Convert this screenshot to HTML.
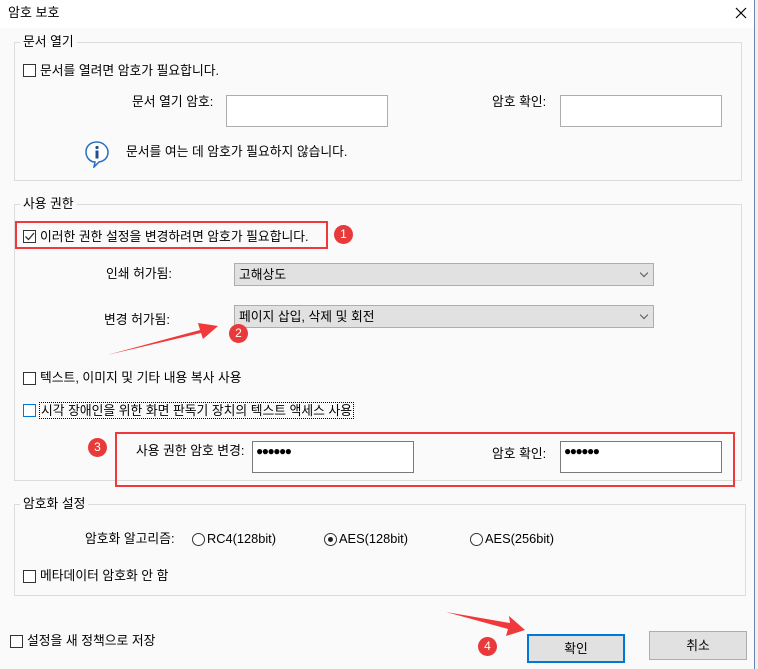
<!DOCTYPE html>
<html><head><meta charset="utf-8"><style>
*{margin:0;padding:0;box-sizing:border-box}
body{width:758px;height:669px;overflow:hidden;background:#fff;font-family:"Liberation Sans","Noto Sans CJK KR","NanumGothic",sans-serif;font-size:12.8px;color:#000;position:relative}
.a{position:absolute;white-space:nowrap;line-height:16px}
.body{position:absolute;left:0;top:28px;width:754px;height:641px;background:#fafafa}
.edge{position:absolute;left:754px;top:0;width:4px;height:669px;background:#f0f0f0;border-left:1px solid #6a86a8}
.grp{position:absolute;border:1px solid #dcdcdc}
.leg{position:absolute;background:#fafafa;padding:0 3px;line-height:16px}
.cb{position:absolute;width:13px;height:13px;border:1px solid #333;background:#fff}
.in{position:absolute;border:1px solid #adadad;background:#fff}
.in2{position:absolute;border:1px solid #7a7a7a;background:#fff;font-size:12px;letter-spacing:-1.5px;padding-left:3px;line-height:18px}
.sel{position:absolute;border:1px solid #adadad;background:#e1e1e1;padding-left:4px;line-height:21px}
.sel:after{content:"";position:absolute;right:6px;top:6px;width:5px;height:5px;border-right:1px solid #555;border-bottom:1px solid #555;transform:rotate(45deg)}
.red{position:absolute;border:2.5px solid #f0393a}
.bd{position:absolute;width:19px;height:19px;border-radius:50%;background:#e83a3a;color:#fff;font-size:12px;text-align:center;line-height:19px}
.rd{position:absolute;width:13px;height:13px;border:1px solid #333;border-radius:50%;background:#fff}
.btn{position:absolute;background:#e1e1e1;border:1px solid #adadad;text-align:center}
</style></head><body>
<div class="body"></div>
<div class="edge"></div>
<div class="a" style="left:8px;top:5px;font-size:13px">암호 보호</div>
<svg class="a" style="left:735px;top:7px" width="12" height="12"><path d="M1 1L11 11M11 1L1 11" stroke="#000" stroke-width="1.2"/></svg>

<div class="grp" style="left:14px;top:42px;width:728px;height:139px"></div>
<div class="leg" style="left:20px;top:34px">문서 열기</div>
<div class="cb" style="left:23px;top:64px"></div>
<div class="a" style="left:40px;top:63px">문서를 열려면 암호가 필요합니다.</div>
<div class="a" style="left:132px;top:94px">문서 열기 암호:</div>
<div class="in" style="left:226px;top:95px;width:162px;height:32px"></div>
<div class="a" style="left:492px;top:94px">암호 확인:</div>
<div class="in" style="left:560px;top:95px;width:162px;height:32px"></div>
<svg class="a" style="left:84px;top:140px" width="26" height="28"><path d="M13 2C6 2 2 6.5 2 12s4 10 9 10l-1 5 5-5c6-1 9-5 9-10S19 2 13 2z" fill="#fff" stroke="#2a6ebf" stroke-width="1.5"/><circle cx="13" cy="7.5" r="1.6" fill="#1f4f8f"/><rect x="11.5" y="10.5" width="3" height="8" fill="#1f4f8f"/></svg>
<div class="a" style="left:126px;top:144px">문서를 여는 데 암호가 필요하지 않습니다.</div>

<div class="grp" style="left:14px;top:204px;width:728px;height:277px"></div>
<div class="leg" style="left:20px;top:196px">사용 권한</div>
<div class="red" style="left:15px;top:221px;width:313px;height:28px"></div>
<div class="cb" style="left:23px;top:230px"></div>
<svg class="a" style="left:24px;top:231px" width="11" height="11"><path d="M1.5 5.5L4.5 8.5L10 2" fill="none" stroke="#333" stroke-width="1.3"/></svg>
<div class="a" style="left:40px;top:229px">이러한 권한 설정을 변경하려면 암호가 필요합니다.</div>
<div class="bd" style="left:334px;top:225px">1</div>
<div class="a" style="left:106px;top:266px">인쇄 허가됨:</div>
<div class="sel" style="left:234px;top:263px;width:420px;height:23px">고해상도</div>
<div class="a" style="left:104px;top:312px">변경 허가됨:</div>
<div class="sel" style="left:234px;top:305px;width:420px;height:23px">페이지 삽입, 삭제 및 회전</div>
<svg class="a" style="left:0;top:0" width="758" height="669"><path d="M107 355L200 330L198 323L218 326L203 339L201 333Z" fill="#f0393a"/><path d="M446 612L510 623L509 616L525 630L506 636L508 629Z" fill="#f0393a"/></svg>
<div class="bd" style="left:229px;top:324px">2</div>
<div class="cb" style="left:23px;top:372px"></div>
<div class="a" style="left:40px;top:370px">텍스트, 이미지 및 기타 내용 복사 사용</div>
<div class="cb" style="left:23px;top:404px;border-color:#0078d7"></div>
<div class="a" style="left:39px;top:402px;border:1px dotted #000;padding:0 1px;line-height:15px">시각 장애인을 위한 화면 판독기 장치의 텍스트 액세스 사용</div>
<div class="red" style="left:115px;top:432px;width:620px;height:55px"></div>
<div class="bd" style="left:88px;top:438px">3</div>
<div class="a" style="left:136px;top:443px">사용 권한 암호 변경:</div>
<div class="in2" style="left:252px;top:441px;width:162px;height:32px">●●●●●●</div>
<div class="a" style="left:492px;top:446px">암호 확인:</div>
<div class="in2" style="left:560px;top:441px;width:162px;height:32px">●●●●●●</div>

<div class="grp" style="left:14px;top:504px;width:732px;height:92px"></div>
<div class="leg" style="left:20px;top:496px">암호화 설정</div>
<div class="a" style="left:85px;top:531px">암호화 알고리즘:</div>
<div class="rd" style="left:192px;top:533px"></div>
<div class="a" style="left:207px;top:531px">RC4(128bit)</div>
<div class="rd" style="left:324px;top:533px"></div>
<div class="a" style="left:328px;top:537px;width:5px;height:5px;border-radius:50%;background:#222"></div>
<div class="a" style="left:339px;top:531px">AES(128bit)</div>
<div class="rd" style="left:470px;top:533px"></div>
<div class="a" style="left:485px;top:531px">AES(256bit)</div>
<div class="cb" style="left:23px;top:570px"></div>
<div class="a" style="left:40px;top:568px">메타데이터 암호화 안 함</div>

<div class="cb" style="left:10px;top:635px"></div>
<div class="a" style="left:27px;top:633px">설정을 새 정책으로 저장</div>
<div class="bd" style="left:478px;top:637px">4</div>
<div class="btn" style="left:527px;top:634px;width:98px;height:29px;border:2px solid #0078d7;line-height:25px">확인</div>
<div class="btn" style="left:649px;top:631px;width:98px;height:29px;line-height:27px">취소</div>
</body></html>
